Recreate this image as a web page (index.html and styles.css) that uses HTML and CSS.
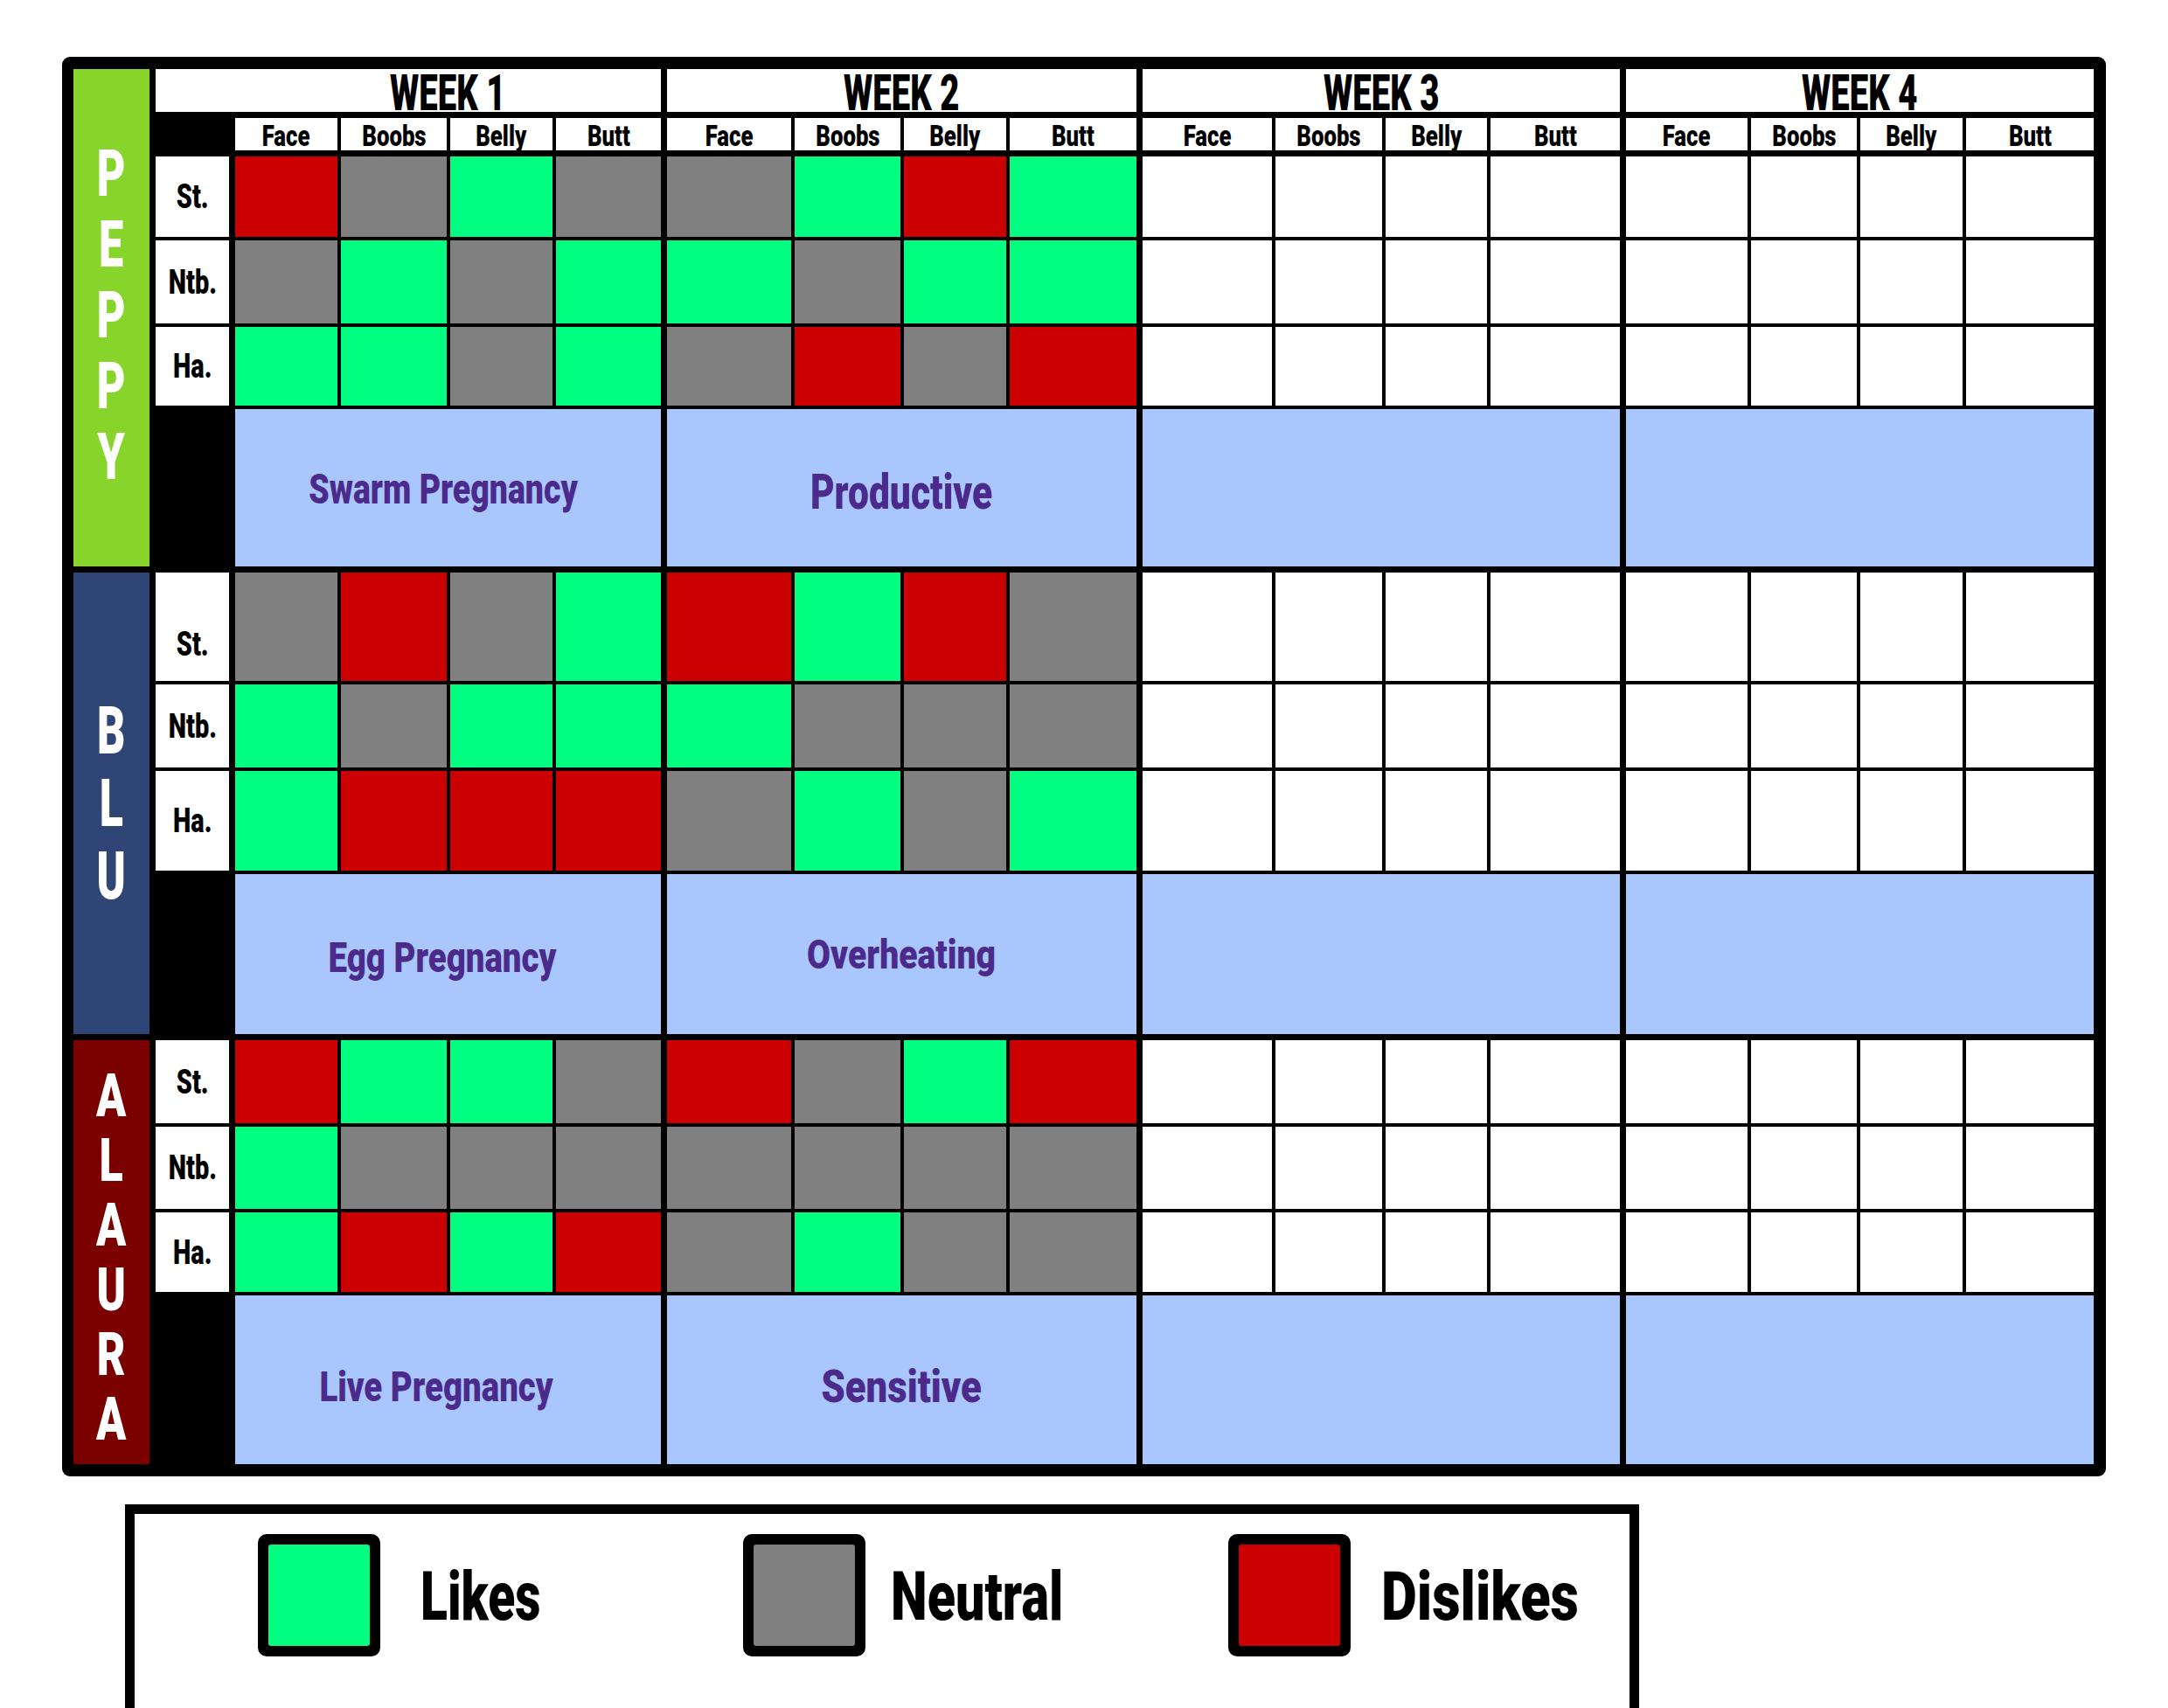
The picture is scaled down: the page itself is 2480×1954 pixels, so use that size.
FILE: index.html
```html
<!DOCTYPE html>
<html lang="en">
<head>
<meta charset="utf-8">
<title>Weekly Preferences Chart</title>
<link rel="stylesheet" href="styles.css">
</head>
<body>
<div class="page">
  <div class="sheet">
    <div class="name peppy"><div class="letters"><span>P</span><span>E</span><span>P</span><span>P</span><span>Y</span></div></div>

    <div class="week-title first"><span class="sq">WEEK 1</span></div>
    <div class="week-title"><span class="sq">WEEK 2</span></div>
    <div class="week-title"><span class="sq">WEEK 3</span></div>
    <div class="week-title"><span class="sq">WEEK 4</span></div>

    <div class="parts wk1 p-first"><div><span class="sq">Face</span></div><div><span class="sq">Boobs</span></div><div><span class="sq">Belly</span></div><div><span class="sq">Butt</span></div></div>
    <div class="parts wk2"><div><span class="sq">Face</span></div><div><span class="sq">Boobs</span></div><div><span class="sq">Belly</span></div><div><span class="sq">Butt</span></div></div>
    <div class="parts wk3"><div><span class="sq">Face</span></div><div><span class="sq">Boobs</span></div><div><span class="sq">Belly</span></div><div><span class="sq">Butt</span></div></div>
    <div class="parts wk4"><div><span class="sq">Face</span></div><div><span class="sq">Boobs</span></div><div><span class="sq">Belly</span></div><div><span class="sq">Butt</span></div></div>

    <!-- PEPPY -->
    <div class="labels sec-p"><div class="lbl"><span class="sq">St.</span></div><div class="lbl"><span class="sq">Ntb.</span></div><div class="lbl"><span class="sq">Ha.</span></div></div>
    <div class="block wk1 sec-p">
      <div class="r"></div><div class="n"></div><div class="g"></div><div class="n"></div>
      <div class="n"></div><div class="g"></div><div class="n"></div><div class="g"></div>
      <div class="g"></div><div class="g"></div><div class="n"></div><div class="g"></div>
      <div class="summary"><span class="sq t-swarm">Swarm Pregnancy</span></div>
    </div>
    <div class="block wk2 sec-p">
      <div class="n"></div><div class="g"></div><div class="r"></div><div class="g"></div>
      <div class="g"></div><div class="n"></div><div class="g"></div><div class="g"></div>
      <div class="n"></div><div class="r"></div><div class="n"></div><div class="r"></div>
      <div class="summary"><span class="sq t-productive">Productive</span></div>
    </div>
    <div class="block wk3 sec-p">
      <div class="w"></div><div class="w"></div><div class="w"></div><div class="w"></div>
      <div class="w"></div><div class="w"></div><div class="w"></div><div class="w"></div>
      <div class="w"></div><div class="w"></div><div class="w"></div><div class="w"></div>
      <div class="summary"></div>
    </div>
    <div class="block wk4 sec-p">
      <div class="w"></div><div class="w"></div><div class="w"></div><div class="w"></div>
      <div class="w"></div><div class="w"></div><div class="w"></div><div class="w"></div>
      <div class="w"></div><div class="w"></div><div class="w"></div><div class="w"></div>
      <div class="summary"></div>
    </div>

    <!-- BLU -->
    <div class="name blu"><div class="letters"><span>B</span><span>L</span><span>U</span></div></div>
    <div class="labels sec-b"><div class="lbl"><span class="sq">St.</span></div><div class="lbl"><span class="sq">Ntb.</span></div><div class="lbl"><span class="sq">Ha.</span></div></div>
    <div class="block wk1 sec-b">
      <div class="n"></div><div class="r"></div><div class="n"></div><div class="g"></div>
      <div class="g"></div><div class="n"></div><div class="g"></div><div class="g"></div>
      <div class="g"></div><div class="r"></div><div class="r"></div><div class="r"></div>
      <div class="summary"><span class="sq t-egg">Egg Pregnancy</span></div>
    </div>
    <div class="block wk2 sec-b">
      <div class="r"></div><div class="g"></div><div class="r"></div><div class="n"></div>
      <div class="g"></div><div class="n"></div><div class="n"></div><div class="n"></div>
      <div class="n"></div><div class="g"></div><div class="n"></div><div class="g"></div>
      <div class="summary"><span class="sq t-overheating">Overheating</span></div>
    </div>
    <div class="block wk3 sec-b">
      <div class="w"></div><div class="w"></div><div class="w"></div><div class="w"></div>
      <div class="w"></div><div class="w"></div><div class="w"></div><div class="w"></div>
      <div class="w"></div><div class="w"></div><div class="w"></div><div class="w"></div>
      <div class="summary"></div>
    </div>
    <div class="block wk4 sec-b">
      <div class="w"></div><div class="w"></div><div class="w"></div><div class="w"></div>
      <div class="w"></div><div class="w"></div><div class="w"></div><div class="w"></div>
      <div class="w"></div><div class="w"></div><div class="w"></div><div class="w"></div>
      <div class="summary"></div>
    </div>

    <!-- ALAURA -->
    <div class="name alaura"><div class="letters"><span>A</span><span>L</span><span>A</span><span>U</span><span>R</span><span>A</span></div></div>
    <div class="labels sec-a"><div class="lbl"><span class="sq">St.</span></div><div class="lbl"><span class="sq">Ntb.</span></div><div class="lbl"><span class="sq">Ha.</span></div></div>
    <div class="block wk1 sec-a">
      <div class="r"></div><div class="g"></div><div class="g"></div><div class="n"></div>
      <div class="g"></div><div class="n"></div><div class="n"></div><div class="n"></div>
      <div class="g"></div><div class="r"></div><div class="g"></div><div class="r"></div>
      <div class="summary"><span class="sq t-live">Live Pregnancy</span></div>
    </div>
    <div class="block wk2 sec-a">
      <div class="r"></div><div class="n"></div><div class="g"></div><div class="r"></div>
      <div class="n"></div><div class="n"></div><div class="n"></div><div class="n"></div>
      <div class="n"></div><div class="g"></div><div class="n"></div><div class="n"></div>
      <div class="summary"><span class="sq t-sensitive">Sensitive</span></div>
    </div>
    <div class="block wk3 sec-a">
      <div class="w"></div><div class="w"></div><div class="w"></div><div class="w"></div>
      <div class="w"></div><div class="w"></div><div class="w"></div><div class="w"></div>
      <div class="w"></div><div class="w"></div><div class="w"></div><div class="w"></div>
      <div class="summary"></div>
    </div>
    <div class="block wk4 sec-a">
      <div class="w"></div><div class="w"></div><div class="w"></div><div class="w"></div>
      <div class="w"></div><div class="w"></div><div class="w"></div><div class="w"></div>
      <div class="w"></div><div class="w"></div><div class="w"></div><div class="w"></div>
      <div class="summary"></div>
    </div>
  </div>

  <div class="legend">
    <div class="legend-item likes"><div class="swatch"><div class="g"></div></div><span class="sq">Likes</span></div>
    <div class="legend-item neutral"><div class="swatch"><div class="n"></div></div><span class="sq">Neutral</span></div>
    <div class="legend-item dislikes"><div class="swatch"><div class="r"></div></div><span class="sq">Dislikes</span></div>
  </div>
</div>
</body>
</html>
```

FILE: styles.css
```css
html, body {
  margin: 0;
  padding: 0;
  background: #ffffff;
}

body {
  width: 2480px;
  height: 1954px;
  overflow: hidden;
  font-family: "Roboto", "Liberation Sans", "DejaVu Sans", sans-serif;
  font-weight: 900;
  color: #000;
}

.page {
  padding: 65px 0 0 71px;
}

/* squeezed (condensed) text */
.sq {
  display: inline-block;
  white-space: nowrap;
  line-height: 1;
  transform: scaleX(var(--sx, 0.75));
}

/* ---------- main sheet ---------- */
.sheet {
  display: grid;
  width: max-content;
  grid-template-columns: 87px 84px 487px 537px 546px 535px;
  grid-template-rows: 49px 37px 469px 528px 485px;
  gap: 7px;
  padding: 14px 14px 14px 13px;
  background: #000;
  border-radius: 9px;
}

.name {
  display: flex;
  align-items: center;
  justify-content: center;
  color: #ffffff;
}
.name .letters {
  display: flex;
  flex-direction: column;
  align-items: center;
  transform: scaleX(var(--nsx));
}
.name .letters span {
  display: block;
  height: var(--lh);
  line-height: var(--lh);
}

.peppy {
  grid-column: 1;
  grid-row: 1 / 4;
  background: #87d42a;
  font-size: 74px;
  --lh: 81px;
  --nsx: 0.68;
}
.peppy .letters { margin-top: -6px; }
.blu {
  background: #2e4575;
  font-size: 76px;
  --lh: 83px;
  --nsx: 0.66;
}
.alaura {
  background: #7b0000;
  font-size: 68px;
  --lh: 74px;
  --nsx: 0.74;
}
.alaura .letters { margin-top: 12px; }

.week-title {
  background: #ffffff;
  display: flex;
  align-items: center;
  justify-content: center;
  font-size: 58px;
  --sx: 0.66;
}
.week-title .sq { margin-top: 4px; }
.week-title.first {
  grid-column: 2 / 4;
  padding-left: 91px;
}

/* column templates per week */
.wk1 { grid-template-columns: 117px 121px 117px 120px; }
.wk2 { grid-template-columns: 142px 121px 117px 145px; }
.wk3 { grid-template-columns: 148px 122px 116px 148px; }
.wk4 { grid-template-columns: 139px 121px 117px 146px; }

.parts {
  display: grid;
  column-gap: 4px;
  font-size: 33px;
  --sx: 0.78;
}
.p-first { grid-column: 3; }
.parts > div {
  background: #ffffff;
  display: flex;
  align-items: center;
  justify-content: center;
}
.parts > div .sq { margin-top: 3px; }

/* row templates per section */
.sec-p { grid-template-rows: 92px 95px 90px 180px; }
.sec-b { grid-template-rows: 124px 95px 114px 183px; }
.sec-a { grid-template-rows: 95px 94px 91px 193px; }

.labels {
  display: grid;
  row-gap: 4px;
  font-size: 38px;
  --sx: 0.76;
}
.lbl {
  background: #ffffff;
  display: flex;
  align-items: center;
  justify-content: center;
}
.sec-b .lbl:first-child { padding-top: 40px; }

.block {
  display: grid;
  gap: 4px;
}

.g { background: #00ff80; }
.n { background: #808080; }
.r { background: #cc0000; }
.w { background: #ffffff; }

.summary {
  grid-column: 1 / -1;
  background: #a9c7fc;
  color: #4b2a8b;
  display: flex;
  align-items: center;
  justify-content: center;
}

.t-swarm       { font-size: 48px; --sx: 0.78; margin: 4px 10px 0 0; }
.t-productive  { font-size: 56px; --sx: 0.76; margin-top: 10px; }
.t-egg         { font-size: 48px; --sx: 0.8;  margin: 8px 14px 0 0; }
.t-overheating { font-size: 46px; --sx: 0.85; }
.t-live        { font-size: 48px; --sx: 0.8;  margin: 16px 26px 0 0; }
.t-sensitive   { font-size: 52px; --sx: 0.84; margin-top: 16px; }

/* ---------- legend ---------- */
.legend {
  margin: 32px 0 0 72px;
  width: 1732px;
  height: 300px;
  border: 11px solid #000;
  border-bottom: none;
  padding: 23px 0 0 141px;
  box-sizing: border-box;
  display: grid;
  grid-template-columns: 555px 555px auto;
  align-items: start;
}

.legend-item {
  display: flex;
  align-items: center;
  font-size: 77px;
}
.legend-item .sq {
  transform-origin: left center;
  margin-top: 4px;
}
.likes .sq    { margin-left: 46px; --sx: 0.74; }
.neutral .sq  { margin-left: 29px; --sx: 0.77; }
.dislikes .sq { margin-left: 35px; --sx: 0.82; }

.swatch {
  width: 140px;
  height: 140px;
  box-sizing: border-box;
  border: 12px solid #000;
  border-radius: 10px;
  background: #000;
  flex: none;
}
.swatch > div {
  width: 100%;
  height: 100%;
  border-radius: 3px;
}
```
